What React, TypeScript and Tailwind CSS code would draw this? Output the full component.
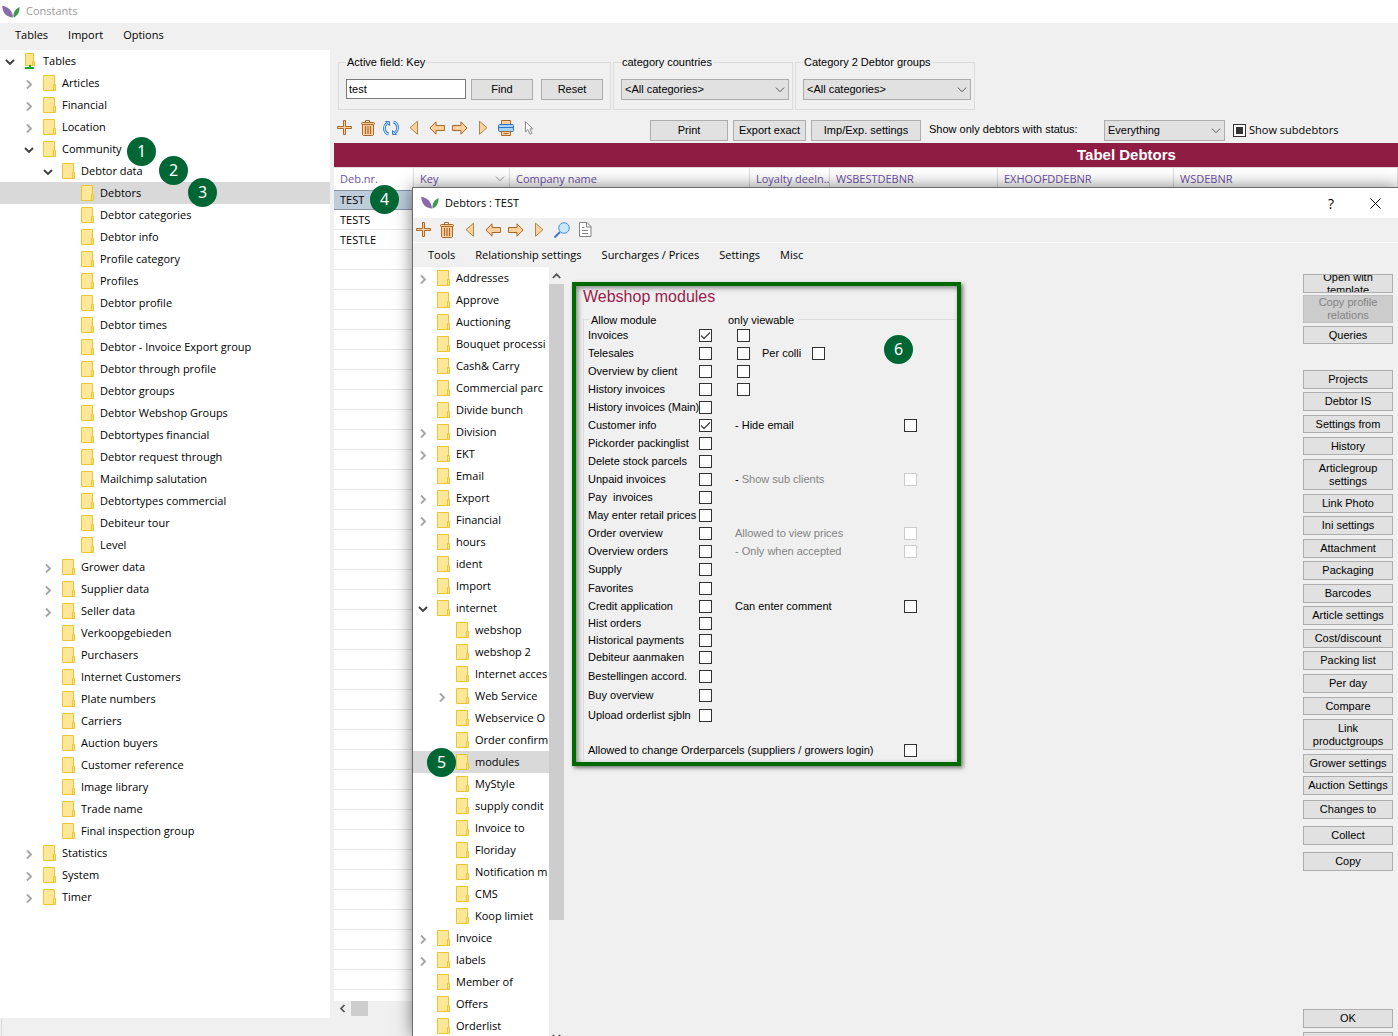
import React from "react";

const SEGOE = "font-['Open_Sans','Noto_Sans',sans-serif] text-[11px]";
const SANS = "font-['Liberation_Sans',Arial,sans-serif] text-[11px]";

/* ---------- icons ---------- */

const line = { stroke: "#a9682c", fill: "#ffcf9c" };

function Logo() {
  return (
    <svg width="18" height="14" viewBox="0 0 18 14" aria-hidden="true" className="shrink-0">
      <path d="M.2.800C6 1.800 10.500 5.500 11 12.500C5 12.300.4 8.500.2.800Z" fill="#8a6bab" />
      <path d="M17.500 2C17.700 7 15.800 10.800 11.600 12.500C10.600 8 13.500 3.500 17.500 2Z" fill="#3d9a4c" />
    </svg>
  );
}

const Plus = () => (
  <svg width="16" height="16" viewBox="0 0 16 16" {...line}>
    <path d="M6.500.5h2v6h6v2h-6v6h-2v-6h-6v-2h6z" />
  </svg>
);
const Trash = () => (
  <svg width="16" height="16" viewBox="0 0 16 16" {...line}>
    <path d="M5.500 2.500v-2h4v2" fill="none" />
    <rect x="1.500" y="2.500" width="13" height="2" rx="1" />
    <path d="M2.500 4.500h11v10l-1 1h-9l-1-1z" />
    <path d="M5.500 6v8M8 6v8M10.500 6v8" strokeWidth="1.200" fill="none" />
  </svg>
);
const Refresh = () => (
  <svg width="16" height="16" viewBox="0 0 16 16" fill="none">
    <g stroke="#3f80cc" strokeWidth="2.800">
      <path d="M5.500 14.200C.3 12.500.3 5.500 4 3.200" />
      <path d="M10.500 1.800c5.200 1.700 5.200 8.700 1.500 11" />
    </g>
    <g stroke="#b9dcfa" strokeWidth="1.100">
      <path d="M5.500 14.200C.3 12.500.3 5.500 4 3.200" />
      <path d="M10.500 1.800c5.200 1.700 5.200 8.700 1.500 11" />
    </g>
    <path d="M2.500 1.500h4v4z M13.500 14.500h-4v-4z" fill="#b9dcfa" stroke="#3f80cc" />
  </svg>
);
const TriLeft = () => (
  <svg width="16" height="16" viewBox="0 0 16 16" fill="#ffcf9c" stroke="#a5894a">
    <path d="M11.500 1.200v13.100L4 7.700z" />
  </svg>
);
const TriRight = () => (
  <svg width="16" height="16" viewBox="0 0 16 16" fill="#ffcf9c" stroke="#a5894a">
    <path d="M4.500 1.200v13.100L12 7.700z" />
  </svg>
);
const ArrowLeft = () => (
  <svg width="16" height="16" viewBox="0 0 16 16" {...line}>
    <path d="M.9 8 7 1.800v3.700h8.500v5H7v3.700z" />
  </svg>
);
const ArrowRight = () => (
  <svg width="16" height="16" viewBox="0 0 16 16" {...line}>
    <path d="M15.100 8 9 1.800v3.700H.5v5H9v3.700z" />
  </svg>
);
const Printer = () => (
  <svg width="16" height="16" viewBox="0 0 16 16">
    <path d="M3.500.5h9v5h-9z" fill="#ffcf9c" stroke="#a9682c" />
    <rect x=".5" y="4.500" width="15" height="7" rx="1" fill="#a9d2f7" stroke="#2f74c8" />
    <path d="M1 7.500h14" stroke="#2f74c8" />
    <path d="M3.500 11.500h9v4h-9z" fill="#ffcf9c" stroke="#a9682c" />
    <path d="M5.500 13.500h5" stroke="#a9682c" />
  </svg>
);
const Cursor = () => (
  <svg width="16" height="16" viewBox="0 0 16 16" fill="#fff" stroke="#8b8b8b">
    <path d="M4.500 1.800v10l2.400-2.200 2 4.700 2-.9-2-4.500h3.100z" />
  </svg>
);
const Magnifier = () => (
  <svg width="16" height="16" viewBox="0 0 16 16">
    <path d="m6 10-5.500 5.500" stroke="#3f7cc4" strokeWidth="2" />
    <circle cx="10" cy="6" r="5.300" fill="#c9eafc" stroke="#4d8fce" />
  </svg>
);
const Doc = () => (
  <svg width="16" height="16" viewBox="0 0 16 16" fill="#fff" stroke="#838383">
    <path d="M2.500.5h7.500l4 4v10h-11.500z" />
    <path d="M9.500.5v4.500h4.500M5 5.500h2.500M5 8.500h6M5 11.500h6" fill="none" />
  </svg>
);

function Folder({ root = false }: { root?: boolean }) {
  return (
    <svg width="13" height="16" viewBox="0 0 13 16" aria-hidden="true" className="shrink-0">
      {root ? (
        <>
          <path d="M1.500.5h8v12h-8z" fill="#ffe48f" stroke="#ebc72f" />
          <path d="M8.500 8.500h2v4h-2z" fill="#ffe48f" stroke="#ebc72f" />
          <path d="M5 12h2v2h3v2H1v-2h4z" fill="#17a82b" />
        </>
      ) : (
        <>
          <path d="M.5.5h11v15H.5z" fill="#ffe799" stroke="#ebc72f" />
          <path d="M10.500 9.500h2v6h-2z" fill="#ffe08a" stroke="#ebc72f" />
        </>
      )}
    </svg>
  );
}

function Chevron({ open }: { open: boolean }) {
  return open ? (
    <svg width="10" height="10" viewBox="0 0 10 10" fill="none" stroke="#404040" strokeWidth="1.900">
      <path d="m1 3 4 4 4-4" />
    </svg>
  ) : (
    <svg width="10" height="10" viewBox="0 0 10 10" fill="none" stroke="#a6a6a6" strokeWidth="1.900">
      <path d="m3 1.500 4 4-4 4" />
    </svg>
  );
}

const SmallChevron = ({ className, stroke = "#555" }: { className: string; stroke?: string }) => (
  <svg width="10" height="6" viewBox="0 0 10 6" fill="none" stroke={stroke} className={className}>
    <path d="m1 .7 4 4 4-4" />
  </svg>
);

function Badge({ n, className }: { n: number; className: string }) {
  return (
    <span
      className={`absolute z-20 flex size-[29px] items-center justify-center rounded-full bg-[#006633] pb-px font-['Noto_Sans',sans-serif] text-[16px] leading-none text-white ${className}`}
    >
      {n}
    </span>
  );
}

/* ---------- tree ---------- */

type Node = { t: string; d: number; s?: "open" | "closed"; sel?: boolean; n?: number; at?: string };

const mainTree: Node[] = [
  { t: "Tables", d: 0, s: "open" },
  { t: "Articles", d: 1, s: "closed" },
  { t: "Financial", d: 1, s: "closed" },
  { t: "Location", d: 1, s: "closed" },
  { t: "Community", d: 1, s: "open", n: 1, at: "left-[127px] -top-px" },
  { t: "Debtor data", d: 2, s: "open", n: 2, at: "left-[159px] -top-1" },
  { t: "Debtors", d: 3, sel: true, n: 3, at: "left-[188px] -top-1" },
  ...[
    "Debtor categories", "Debtor info", "Profile category", "Profiles", "Debtor profile", "Debtor times",
    "Debtor - Invoice Export group", "Debtor through profile", "Debtor groups", "Debtor Webshop Groups",
    "Debtortypes financial", "Debtor request through", "Mailchimp salutation", "Debtortypes commercial",
    "Debiteur tour", "Level",
  ].map((t) => ({ t, d: 3 })),
  { t: "Grower data", d: 2, s: "closed" },
  { t: "Supplier data", d: 2, s: "closed" },
  { t: "Seller data", d: 2, s: "closed" },
  ...[
    "Verkoopgebieden", "Purchasers", "Internet Customers", "Plate numbers", "Carriers", "Auction buyers",
    "Customer reference", "Image library", "Trade name", "Final inspection group",
  ].map((t) => ({ t, d: 2 })),
  { t: "Statistics", d: 1, s: "closed" },
  { t: "System", d: 1, s: "closed" },
  { t: "Timer", d: 1, s: "closed" },
];

const debtorTree: Node[] = [
  { t: "Addresses", d: 1, s: "closed" },
  { t: "Approve", d: 1 },
  { t: "Auctioning", d: 1 },
  { t: "Bouquet processi", d: 1 },
  { t: "Cash& Carry", d: 1 },
  { t: "Commercial parc", d: 1 },
  { t: "Divide bunch", d: 1 },
  { t: "Division", d: 1, s: "closed" },
  { t: "EKT", d: 1, s: "closed" },
  { t: "Email", d: 1 },
  { t: "Export", d: 1, s: "closed" },
  { t: "Financial", d: 1, s: "closed" },
  { t: "hours", d: 1 },
  { t: "ident", d: 1 },
  { t: "Import", d: 1 },
  { t: "internet", d: 1, s: "open" },
  { t: "webshop", d: 2 },
  { t: "webshop 2", d: 2 },
  { t: "Internet acces", d: 2 },
  { t: "Web Service", d: 2, s: "closed" },
  { t: "Webservice O", d: 2 },
  { t: "Order confirm", d: 2 },
  { t: "modules", d: 2, sel: true, n: 5, at: "left-[14px] -top-[3px]" },
  { t: "MyStyle", d: 2 },
  { t: "supply condit", d: 2 },
  { t: "Invoice to", d: 2 },
  { t: "Floriday", d: 2 },
  { t: "Notification m", d: 2 },
  { t: "CMS", d: 2 },
  { t: "Koop limiet", d: 2 },
  { t: "Invoice", d: 1, s: "closed" },
  { t: "labels", d: 1, s: "closed" },
  { t: "Member of", d: 1 },
  { t: "Offers", d: 1 },
  { t: "Orderlist", d: 1 },
];

const indent = ["pl-0", "pl-[19px]", "pl-[38px]", "pl-[57px]"];
const indentInner = ["pl-0", "pl-0", "pl-[19px]"];

function Tree({ nodes, inner = false }: { nodes: Node[]; inner?: boolean }) {
  return (
    <ul role="tree" className={SEGOE}>
      {nodes.map((x, i) => (
        <li
          key={i}
          role="treeitem"
          aria-selected={!!x.sel}
          className={`relative flex h-[22px] items-center whitespace-nowrap leading-[22px] ${
            inner ? indentInner[x.d] : indent[x.d]
          } ${x.sel ? "bg-[#d9d9d9]" : ""}`}
        >
          <span className="flex w-6 shrink-0 items-center pt-px pl-[5px]">{x.s && <Chevron open={x.s === "open"} />}</span>
          <Folder root={x.d === 0} />
          <span className="pl-[6px]">{x.t}</span>
          {x.n && <Badge n={x.n} className={x.at!} />}
        </li>
      ))}
    </ul>
  );
}

/* ---------- controls ---------- */

function Btn({ children, className = "", disabled = false }: { children: React.ReactNode; className?: string; disabled?: boolean }) {
  return (
    <button
      disabled={disabled}
      className={`flex shrink-0 items-center justify-center border text-center leading-[13px] ${
        disabled ? "border-[#bfbfbf] bg-[#cccccc] text-[#838383]" : "border-[#adadad] bg-[#e1e1e1] text-black"
      } ${className}`}
    >
      {children}
    </button>
  );
}

function Check({ id, label, checked = false, disabled = false, mixed = false }: { id: string; label?: string; checked?: boolean; disabled?: boolean; mixed?: boolean }) {
  return (
    <span className="relative block size-[13px] shrink-0">
      <input
        id={id}
        type="checkbox"
        aria-label={label}
        defaultChecked={checked}
        disabled={disabled}
        className="peer block size-[13px] appearance-none border border-[#333] bg-white disabled:border-[#ccc]"
      />
      {mixed ? (
        <span className="pointer-events-none absolute inset-[3px] bg-[#333]" />
      ) : (
        <svg viewBox="0 0 13 13" className="pointer-events-none absolute inset-0 hidden size-[13px] peer-checked:block" fill="none" stroke="#444" strokeWidth="1.300">
          <path d="m2 6.500 3 3L11 3.500" />
        </svg>
      )}
    </span>
  );
}

function Select({ id, label, value, className }: { id: string; label: string; value: string; className: string }) {
  return (
    <span className={`relative block shrink-0 ${className}`}>
      <select id={id} aria-label={label} className="block h-[21px] w-full appearance-none border border-[#adadad] bg-[#e1e1e1] pl-[3px] text-black">
        <option>{value}</option>
      </select>
      <SmallChevron className="pointer-events-none absolute top-2 right-1" />
    </span>
  );
}

function Group({ title, className, children }: { title: string; className: string; children: React.ReactNode }) {
  return (
    <fieldset className={`h-[54px] shrink-0 border border-[#dcdcdc] pr-[2px] pl-[7px] ${className}`}>
      <legend className="h-3 px-px leading-3">{title}</legend>
      <div className="flex gap-[5px] pt-[11px]">{children}</div>
    </fieldset>
  );
}

/* ---------- module form ---------- */

type Mod = { t: string; h: string; on?: boolean; view?: boolean; colli?: boolean; extra?: string; pad?: string; off?: boolean };

const modules: Mod[] = [
  { t: "Invoices", h: "h-[18px]", on: true, view: true },
  { t: "Telesales", h: "h-[18px]", view: true, colli: true },
  { t: "Overview by client", h: "h-[18px]", view: true },
  { t: "History invoices", h: "h-[18px]", view: true },
  { t: "History invoices (Main)", h: "h-[18px]" },
  { t: "Customer info", h: "h-[18px]", on: true, extra: "- Hide email" },
  { t: "Pickorder packinglist", h: "h-[18px]" },
  { t: "Delete stock parcels", h: "h-[18px]" },
  { t: "Unpaid invoices", h: "h-[18px]", extra: "Show sub clients", off: true, pad: "-" },
  { t: "Pay  invoices", h: "h-[18px]" },
  { t: "May enter retail prices", h: "h-[18px]" },
  { t: "Order overview", h: "h-[18px]", extra: "Allowed to view prices", off: true },
  { t: "Overview orders", h: "h-[18px]", extra: "- Only when accepted", off: true },
  { t: "Supply", h: "h-[18px]" },
  { t: "Favorites", h: "h-[20px]" },
  { t: "Credit application", h: "h-[16px]", extra: "Can enter comment" },
  { t: "Hist orders", h: "h-[18px]" },
  { t: "Historical payments", h: "h-[16px]" },
  { t: "Debiteur aanmaken", h: "h-[18px]" },
  { t: "Bestellingen accord.", h: "h-[20px]" },
  { t: "Buy overview", h: "h-[18px]" },
  { t: "Upload orderlist sjbln", h: "h-[22px]" },
];

function ModuleForm() {
  return (
    <section className="relative h-[484px] w-[389px] shrink-0 border-4 border-[#006a00] pl-[7px] shadow-[2px_2px_4px_rgba(0,0,0,0.5),inset_2px_2px_5px_rgba(0,0,0,0.45)]">
      <h1 className="h-[33px] pt-px text-[16px] leading-[20px] text-[#9a1b4b]">Webshop modules</h1>
      <div className="relative h-[443px] border-t border-l border-[#dcdcdc] pl-1">
        <span className="absolute -top-[6px] left-[5px] w-[140px] bg-[#f0f0f0] px-[2px] leading-[13px]">Allow module</span>
        <span className="absolute -top-[6px] left-[140px] bg-[#f0f0f0] px-1 leading-[13px]">only viewable</span>
        <div className="pt-[6px]">
          {modules.map((m, i) => (
            <div key={m.t} className={`flex items-center whitespace-pre leading-[13px] ${m.h}`}>
              <label htmlFor={`mod-${i}`} className="w-[111px] shrink-0">
                {m.t}
              </label>
              <Check id={`mod-${i}`} checked={m.on} />
              {m.view && (
                <span className="pl-[25px]">
                  <Check id={`view-${i}`} label={`${m.t} only viewable`} />
                </span>
              )}
              {m.colli && (
                <>
                  <label htmlFor="colli" className="w-[62px] pl-3">
                    Per colli
                  </label>
                  <Check id="colli" />
                </>
              )}
              {m.extra && (
                <>
                  <label htmlFor={`extra-${i}`} className={`w-[192px] pl-[23px] ${m.off ? "text-[#838383]" : ""}`}>
                    {m.pad && <span className="text-black">- </span>}
                    {m.extra}
                  </label>
                  <Check id={`extra-${i}`} disabled={m.off} />
                </>
              )}
            </div>
          ))}
          <div className="mt-[15px] flex h-[18px] items-center leading-[13px]">
            <label htmlFor="parcels" className="w-[316px] shrink-0">
              Allowed to change Orderparcels (suppliers / growers login)
            </label>
            <Check id="parcels" />
          </div>
        </div>
      </div>
      <Badge n={6} className="top-[49px] left-[308px]" />
    </section>
  );
}

const actions: [string, string][] = [
  ["Projects", "mt-[26px] h-[19px]"],
  ["Debtor IS", "mt-[3px] h-[19px]"],
  ["Settings from", "mt-1 h-[18px]"],
  ["History", "mt-1 h-[18px]"],
  ["Articlegroup settings", "mt-1 h-[31px]"],
  ["Link Photo", "mt-1 h-[19px]"],
  ["Ini settings", "mt-[3px] h-[19px]"],
  ["Attachment", "mt-1 h-[19px]"],
  ["Packaging", "mt-[3px] h-[19px]"],
  ["Barcodes", "mt-1 h-[19px]"],
  ["Article settings", "mt-[3px] h-[19px]"],
  ["Cost/discount", "mt-1 h-[19px]"],
  ["Packing list", "mt-[3px] h-[19px]"],
  ["Per day", "mt-1 h-[19px]"],
  ["Compare", "mt-1 h-[18px]"],
  ["Link productgroups", "mt-1 h-[31px]"],
  ["Grower settings", "mt-1 h-[19px]"],
  ["Auction Settings", "mt-[3px] h-[19px]"],
  ["Changes to", "mt-[5px] h-[19px]"],
  ["Collect", "mt-[7px] h-[19px]"],
  ["Copy", "mt-[7px] h-[19px]"],
];

const IconBtn = ({ label, children }: { label: string; children: React.ReactNode }) => (
  <button aria-label={label} className="flex size-4 shrink-0 items-center justify-center">
    {children}
  </button>
);

function Menu({ items, className }: { items: string[]; className: string }) {
  return (
    <nav className={`flex shrink-0 items-center gap-5 bg-[#f0f0f0] ${SEGOE} ${className}`}>
      {items.map((m) => (
        <button key={m} className="whitespace-nowrap leading-5">
          {m}
        </button>
      ))}
    </nav>
  );
}

function DebtorDialog() {
  return (
    <div
      role="dialog"
      aria-label="Debtors : TEST"
      className="absolute top-[187px] right-0 bottom-0 left-[412px] z-10 flex flex-col overflow-hidden border-t border-l border-[#6b6b6b] bg-[#f0f0f0] shadow-[0_0_16px_rgba(0,0,0,0.5)]"
    >
      <header className={`flex h-[30px] shrink-0 items-center bg-white pr-[17px] pl-2 ${SEGOE}`}>
        <Logo />
        <h2 className="flex-1 pl-[6px]">Debtors : TEST</h2>
        <button aria-label="Help" className="text-[14px]">?</button>
        <button aria-label="Close" className="pl-9">
          <svg width="11" height="11" viewBox="0 0 11 11" stroke="#000">
            <path d="m.5.5 10 10M10.500.5l-10 10" />
          </svg>
        </button>
      </header>
      <div className="flex h-[25px] shrink-0 items-center gap-[7px] border-b border-white pl-[3px]">
        <IconBtn label="Add"><Plus /></IconBtn>
        <IconBtn label="Delete"><Trash /></IconBtn>
        <IconBtn label="First"><TriLeft /></IconBtn>
        <IconBtn label="Previous"><ArrowLeft /></IconBtn>
        <IconBtn label="Next"><ArrowRight /></IconBtn>
        <IconBtn label="Last"><TriRight /></IconBtn>
        <IconBtn label="Search"><Magnifier /></IconBtn>
        <IconBtn label="Document"><Doc /></IconBtn>
      </div>
      <Menu items={["Tools", "Relationship settings", "Surcharges / Prices", "Settings", "Misc"]} className="h-6 pl-[15px]" />
      <div className={`flex min-h-0 flex-1 ${SANS}`}>
        <div className="w-[136px] shrink-0 overflow-hidden bg-white">
          <Tree nodes={debtorTree} inner />
        </div>
        <div className="flex w-[15px] shrink-0 flex-col items-center">
          <div className="flex h-[17px] shrink-0 items-center">
            <svg width="9" height="6" viewBox="0 0 9 6" fill="none" stroke="#505050" strokeWidth="1.700">
              <path d="m.8 5 3.700-3.700L8.200 5" />
            </svg>
          </div>
          <div className="h-[636px] w-full shrink bg-[#cdcdcd]" />
          <div className="flex-1" />
          <svg width="9" height="6" viewBox="0 0 9 6" fill="none" stroke="#505050" strokeWidth="1.700" className="-mb-1 shrink-0">
            <path d="M.8 1 4.500 4.700 8.200 1" />
          </svg>
        </div>
        <div className="flex-1 pt-[15px] pl-2">
          <ModuleForm />
        </div>
        <div className="flex w-[95px] shrink-0 flex-col items-stretch pt-[6px] pr-[5px]">
          <Btn className="mt-px h-[19px] overflow-hidden">
            Open with
            <br />
            template
          </Btn>
          <Btn disabled className="mt-[2px] h-7">
            Copy profile
            <br />
            relations
          </Btn>
          <Btn className="mt-[3px] h-[18px]">Queries</Btn>
          {actions.map(([t, c]) => (
            <Btn key={t} className={c}>
              {t}
            </Btn>
          ))}
          <Btn className="mt-auto h-[19px]">OK</Btn>
          <Btn className="mt-1 -mb-[15px] h-[19px]">{""}</Btn>
        </div>
      </div>
    </div>
  );
}

/* ---------- main window ---------- */

const cols: [string, string][] = [
  ["Deb.nr.", "w-[80px]"],
  ["Key", "w-[96px]"],
  ["Company name", "w-[240px]"],
  ["Loyalty deeln..", "w-[80px]"],
  ["WSBESTDEBNR", "w-[168px]"],
  ["EXHOOFDDEBNR", "w-[176px]"],
  ["WSDEBNR", ""],
];
const rows = ["TEST", "TESTS", "TESTLE", ...Array(38).fill("")];

export default function App() {
  return (
    <div className={`relative flex h-screen flex-col overflow-hidden bg-[#f0f0f0] text-black ${SANS}`}>
      <header className={`flex h-[23px] shrink-0 items-center bg-white pl-[2px] text-[#9a9a9a] ${SEGOE}`}>
        <Logo />
        <span className="pl-[6px]">Constants</span>
      </header>
      <Menu items={["Tables", "Import", "Options"]} className="h-[27px] pb-[3px] pl-[15px]" />
      <main className="flex min-h-0 flex-1 gap-1">
        <aside className="w-[330px] shrink-0 overflow-hidden bg-white">
          <Tree nodes={mainTree} />
        </aside>
        <div className="flex min-w-0 flex-1 flex-col">
          <div className="flex h-[61px] shrink-0 gap-[2px] pt-[6px] pl-1">
            <Group title="Active field: Key" className="w-[273px]">
              <input aria-label="Active field: Key" defaultValue="test" className="h-5 w-[120px] border border-[#7a7a7a] bg-white pl-[2px]" />
              <Btn className="h-[21px] w-[62px]">Find</Btn>
              <Btn className="ml-[3px] h-[21px] w-[62px]">Reset</Btn>
            </Group>
            <Group title="category countries" className="w-[180px]">
              <Select id="countries" label="category countries" value="<All categories>" className="w-[168px]" />
            </Group>
            <Group title="Category 2 Debtor groups" className="w-[180px]">
              <Select id="groups" label="Category 2 Debtor groups" value="<All categories>" className="w-[168px]" />
            </Group>
          </div>
          <div className="flex h-8 shrink-0 items-center pt-[6px]">
            <div className="flex w-[316px] shrink-0 gap-[7px] pb-1 pl-[3px]">
              <IconBtn label="Add"><Plus /></IconBtn>
              <IconBtn label="Delete"><Trash /></IconBtn>
              <IconBtn label="Refresh"><Refresh /></IconBtn>
              <IconBtn label="First"><TriLeft /></IconBtn>
              <IconBtn label="Previous"><ArrowLeft /></IconBtn>
              <IconBtn label="Next"><ArrowRight /></IconBtn>
              <IconBtn label="Last"><TriRight /></IconBtn>
              <IconBtn label="Print"><Printer /></IconBtn>
              <IconBtn label="Select"><Cursor /></IconBtn>
            </div>
            <Btn className="h-[21px] w-[78px]">Print</Btn>
            <Btn className="ml-[5px] h-[21px] w-[73px]">Export exact</Btn>
            <Btn className="ml-[5px] h-[21px] w-[110px]">Imp/Exp. settings</Btn>
            <label htmlFor="status" className="w-[183px] shrink-0 pb-[2px] pl-2">
              Show only debtors with status:
            </label>
            <Select id="status" label="Status" value="Everything" className="w-[121px]" />
            <span className="pl-2">
              <Check id="sub" mixed />
            </span>
            <label htmlFor="sub" className={`pl-[3px] whitespace-nowrap ${SEGOE}`}>
              Show subdebtors
            </label>
          </div>
          <div className="h-6 shrink-0 bg-[#8f1d43] pl-[743px] text-[15px] leading-6 font-bold whitespace-nowrap text-white">Tabel Debtors</div>
          <div className="min-h-0 flex-1 overflow-hidden bg-white">
            <table className={`w-full table-fixed border-separate border-spacing-0 ${SEGOE}`}>
              <thead>
                <tr className="h-[23px]">
                  {cols.map(([c, w]) => (
                    <th key={c} className={`${w} relative border-t border-r border-[#dcdcdc] p-0 pl-[6px] text-left font-normal whitespace-nowrap text-[#6d50a5]`}>
                      {c}
                      {c === "Key" && <SmallChevron stroke="#999" className="absolute top-2 right-1" />}
                    </th>
                  ))}
                </tr>
              </thead>
              <tbody>
                {rows.map((r, i) => (
                  <tr key={i} className="h-5">
                    {cols.map(([c], j) => (
                      <td
                        key={c}
                        className={`relative border-b p-0 pl-[6px] leading-[18px] ${
                          i === 0 ? "border-t border-[#8797a8] bg-[#bfcddb]" : "border-[#e6e6e6]"
                        }`}
                      >
                        {j === 0 && r}
                        {j === 0 && i === 0 && <Badge n={4} className="-top-[6px] left-9" />}
                      </td>
                    ))}
                  </tr>
                ))}
              </tbody>
            </table>
          </div>
          <div className="flex h-[17px] shrink-0 pl-1">
            <svg width="9" height="15" viewBox="0 0 9 15" fill="none" stroke="#505050" strokeWidth="1.700">
              <path d="M6.500 4 3 7.500 6.500 11" />
            </svg>
            <div className="ml-1 h-[15px] w-[17px] bg-[#cdcdcd]" />
          </div>
        </div>
      </main>
      <footer className="h-[18px] shrink-0 pt-px pl-px">
        <div className="h-full border-l border-[#dcdcdc]" />
      </footer>
      <DebtorDialog />
    </div>
  );
}
